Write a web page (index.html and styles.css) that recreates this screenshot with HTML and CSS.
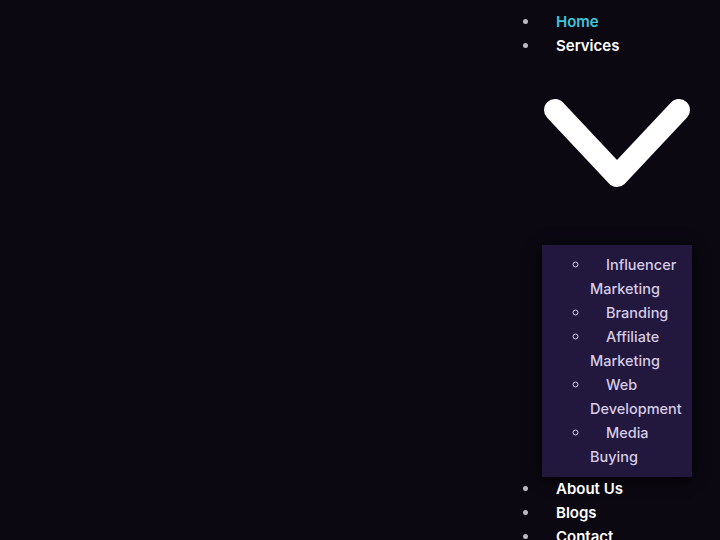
FILE: index.html
```html
<!DOCTYPE html>
<html>
<head>
<meta charset="utf-8">
<link rel="stylesheet" href="styles.css">
</head>
<body>
<nav class="nav">
  <ul class="menu">
    <li class="item"><a class="link active" href="#">Home</a></li>
    <li class="item"><a class="link" href="#">Services</a>
      <svg class="chev" width="150" height="150" viewBox="0 0 150 150"><path d="M13 42 L75 108 L137 42" fill="none" stroke="#ffffff" stroke-width="22" stroke-linecap="round" stroke-linejoin="round"/></svg>
      <div class="sub">
        <ul class="submenu">
          <li class="subitem"><a class="sublink" href="#">Influencer Marketing</a></li>
          <li class="subitem"><a class="sublink" href="#">Branding</a></li>
          <li class="subitem"><a class="sublink" href="#">Affiliate Marketing</a></li>
          <li class="subitem"><a class="sublink" href="#">Web Development</a></li>
          <li class="subitem"><a class="sublink" href="#">Media Buying</a></li>
        </ul>
      </div>
    </li>
    <li class="item"><a class="link" href="#">About Us</a></li>
    <li class="item"><a class="link" href="#">Blogs</a></li>
    <li class="item"><a class="link" href="#">Contact</a></li>
  </ul>
</nav>
</body>
</html>
```
FILE: styles.css
```css
html, body {
  margin: 0;
  padding: 0;
  background: #0b0811;
  height: 100%;
  overflow: hidden;
}
body {
  font-family: Inter, "Liberation Sans", sans-serif;
  font-size: 15px;
  line-height: 24px;
}
.nav {
  display: flex;
  justify-content: flex-end;
}
.menu {
  width: 180px;
  margin: 10px 0 0;
  padding: 0 0 0 40px;
  list-style: disc;
}
.item {
  color: #bdbac4;
}
.link {
  color: #ffffff;
  text-decoration: none;
  font-weight: 600;
  padding-left: 16px;
}
.link.active {
  color: #3ec7dc;
}
.chev {
  display: block;
  margin: 10px 0 0 2px;
}
.sub {
  width: 150px;
  box-sizing: border-box;
  margin: 27px 0 0 2px;
  padding: 8px;
  background: #22173d;
  box-shadow: 0 2px 14px rgba(0, 0, 0, 0.8);
}
.submenu {
  margin: 0;
  padding: 0 0 0 40px;
  list-style: circle;
}
.subitem {
  color: #d6cce6;
}
.sublink {
  color: #d6cce6;
  text-decoration: none;
  font-weight: 500;
  font-size: 14.5px;
  padding-left: 16px;
}
```
